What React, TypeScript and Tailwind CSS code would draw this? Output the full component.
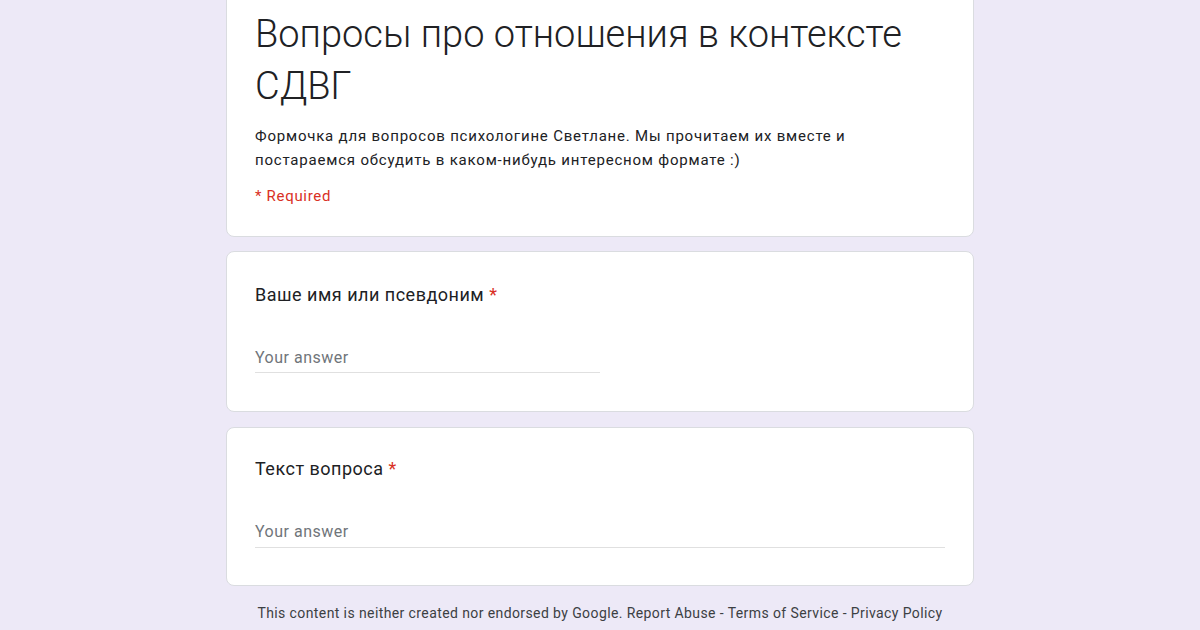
export default function App() {
  return (
    <div className="h-[630px] overflow-hidden bg-[#ede9f7] font-['Roboto',sans-serif] text-[#202124]">
      <div className="mx-auto flex w-[748px] flex-col">
        <div className="mt-[-16px] rounded-lg border border-[#dadce0] bg-white px-[28px] pb-[28px] pt-[23px]">
          <h1 className="text-[38px] leading-[52px] font-light text-[#202124]">
            Вопросы про отношения в контексте СДВГ
          </h1>
          <p className="mt-[12px] text-[15px] leading-[24px] tracking-[0.8px] text-[#202124]">
            Формочка для вопросов психологине Светлане. Мы прочитаем их вместе и
            <br />
            постараемся обсудить в каком-нибудь интересном формате :)
          </p>
          <div className="mt-[12px] text-[15px] leading-[24px] tracking-[0.7px] text-[#d93025]">* Required</div>
        </div>

        <div className="mt-[14px] rounded-lg border border-[#dadce0] bg-white px-[28px] pb-[38px] pt-[31px]">
          <QuestionTitle title="Ваше имя или псевдоним" />
          <AnswerLine className="mt-[39px] w-[345px] pb-[2px]" />
        </div>

        <div className="mt-[15px] rounded-lg border border-[#dadce0] bg-white px-[28px] pb-[37px] pt-[29px]">
          <QuestionTitle title="Текст вопроса" />
          <AnswerLine className="mt-[39px] w-full pb-[3px]" />
        </div>

        <div className="mt-[17px] text-center text-[14px] leading-[20px] tracking-[0.4px] text-[#3c4043]">
          This content is neither created nor endorsed by Google. Report Abuse - Terms of Service - Privacy Policy
        </div>
      </div>
    </div>
  );
}

function QuestionTitle({ title }: { title: string }) {
  return (
    <div className="text-[18px] leading-[24px] tracking-[0.5px] text-[#202124]">
      {title} <span className="text-[#d93025]">*</span>
    </div>
  );
}

function AnswerLine({ className }: { className: string }) {
  return (
    <div className={`border-b border-[#e0e0e0] ${className}`}>
      <div className="text-[16px] leading-[24px] tracking-[0.5px] text-[#70757a]">Your answer</div>
    </div>
  );
}
